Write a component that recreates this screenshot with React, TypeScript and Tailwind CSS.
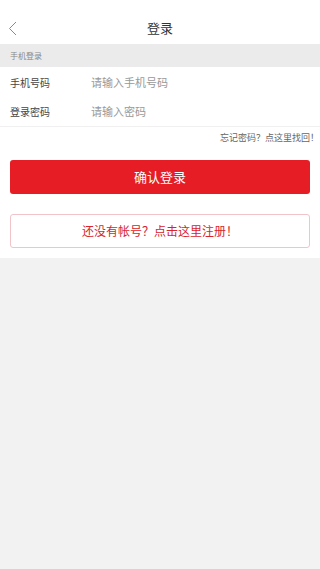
export default function App() {
  const font = { fontFamily: '"Noto Sans CJK SC", "Noto Sans", sans-serif' };
  return (
    <div className="min-h-[569px] w-[320px] bg-[#f2f2f2]" style={font}>
      <div className="bg-white">
        <div className="relative flex h-[44px] items-center justify-center">
          <svg className="absolute left-[8px] top-[21px]" width="9" height="15" viewBox="0 0 9 15" fill="none">
            <path d="M8 1L1.5 7.5L8 14" stroke="#8a8a8a" strokeWidth="1" />
          </svg>
          <span className="pt-[12px] text-[13px] text-[#333]">登录</span>
        </div>
        <div className="flex h-[23px] items-center bg-[#ebebeb] px-[10px] text-[8px] text-[#888]">手机登录</div>
        <div className="flex h-[30px] items-center px-[10px]">
          <span className="w-[81px] text-[10px] text-[#444]">手机号码</span>
          <span className="text-[11px] text-[#999]">请输入手机号码</span>
        </div>
        <div className="flex h-[30px] items-center border-b border-[#f0f0f0] px-[10px]">
          <span className="w-[81px] text-[10px] text-[#444]">登录密码</span>
          <span className="text-[11px] text-[#999]">请输入密码</span>
        </div>
        <div className="flex h-[22px] items-center justify-end pr-[1px] text-[9px] text-[#666]">忘记密码？点这里找回！</div>
        <div className="px-[10px] pt-[11px] pb-[10px]">
          <div className="flex h-[34px] items-center justify-center rounded-[3px] bg-[#e61d25] text-[13px] text-white">确认登录</div>
          <div className="mt-[20px] flex h-[34px] items-center justify-center rounded-[3px] border border-[#f0c4c8] text-[12px] text-[#d8242c]">还没有帐号？点击这里注册！</div>
        </div>
      </div>
    </div>
  );
}
